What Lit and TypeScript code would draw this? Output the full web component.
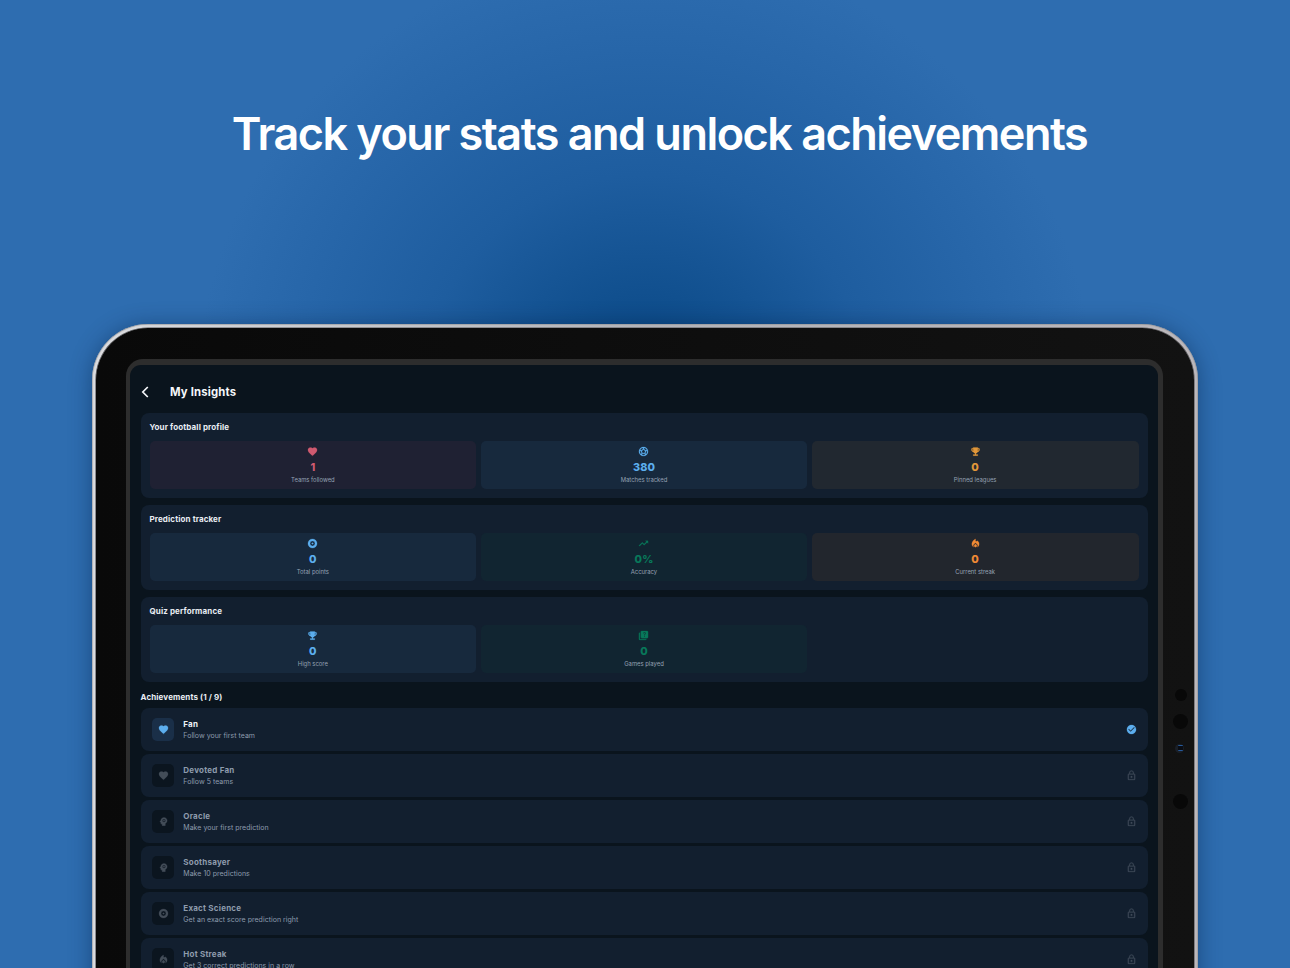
import { LitElement, html, css, svg } from "lit";
import { customElement, property } from "lit/decorators.js";

const ICONS: Record<string, string> = {
  heart: "M12 21.35l-1.45-1.32C5.4 15.36 2 12.28 2 8.5 2 5.42 4.42 3 7.5 3c1.74 0 3.41.81 4.5 2.09C13.09 3.81 14.76 3 16.5 3 19.58 3 22 5.42 22 8.5c0 3.78-3.4 6.86-8.55 11.54L12 21.35z",
  trophy: "M19 5h-2V3H7v2H5c-1.1 0-2 .9-2 2v1c0 2.55 1.92 4.63 4.39 4.94.63 1.5 1.98 2.63 3.61 2.96V18.4H7V21h10v-2.6h-4v-2.5c1.63-.33 2.98-1.46 3.61-2.96C19.08 12.63 21 10.55 21 8V7c0-1.1-.9-2-2-2zM5 8V7h2v3.82C5.84 10.4 5 9.3 5 8zm14 0c0 1.3-.84 2.4-2 2.82V7h2v1z",
  target: "M12 2a10 10 0 1 0 0 20 10 10 0 0 0 0-20zm0 4.6a5.4 5.4 0 1 1 0 10.8 5.4 5.4 0 0 1 0-10.8zm0 3.6a1.8 1.8 0 1 0 0 3.6 1.8 1.8 0 0 0 0-3.6z",
  lock: "M12 17c1.1 0 2-.9 2-2s-.9-2-2-2-2 .9-2 2 .9 2 2 2zm6-9h-1V6c0-2.76-2.24-5-5-5S7 3.24 7 6v2H6c-1.1 0-2 .9-2 2v10c0 1.1.9 2 2 2h12c1.1 0 2-.9 2-2V10c0-1.1-.9-2-2-2zM8.9 6c0-1.71 1.39-3.1 3.1-3.1s3.1 1.39 3.1 3.1v2H8.9V6zM18 20H6V10h12v10z",
  check: "M12 2C6.48 2 2 6.48 2 12s4.48 10 10 10 10-4.48 10-10S17.52 2 12 2zm-2 15l-5-5 1.41-1.41L10 14.17l7.59-7.59L19 8l-9 9z",
  trend: "M16 6l2.29 2.29-4.88 4.88-4-4L2 16.59 3.41 18l6-6 4 4 6.3-6.29L22 12V6z",
  fire: "M12 12.9l-2.13 2.09C9.31 15.55 9 16.28 9 17.06 9 18.68 10.35 20 12 20s3-1.32 3-2.94c0-.78-.31-1.52-.87-2.07L12 12.9zM16 6l-.44.55C14.38 8.02 12 7.19 12 5.3V2S4 6 4 13c0 2.92 1.56 5.47 3.89 6.86-.56-.79-.89-1.76-.89-2.8 0-1.32.52-2.56 1.47-3.5L12 10.1l3.53 3.47c.95.93 1.47 2.17 1.47 3.5 0 1.02-.31 1.96-.85 2.75 1.89-1.15 3.29-3.06 3.71-5.3.66-3.55-1.07-6.9-3.86-8.52z",
  quiz: "M4 6H2v14c0 1.1.9 2 2 2h14v-2H4V6zM20 2H8c-1.1 0-2 .9-2 2v12c0 1.1.9 2 2 2h12c1.1 0 2-.9 2-2V4c0-1.1-.9-2-2-2zm-5.99 13c-.59 0-1.05-.47-1.05-1.05 0-.59.47-1.04 1.05-1.04.59 0 1.04.45 1.04 1.04-.01.58-.45 1.05-1.04 1.05zm2.5-6.17c-.63.93-1.23 1.21-1.56 1.81-.13.24-.18.4-.18 1.18h-1.52c0-.41-.06-1.08.26-1.65.41-.73 1.18-1.16 1.63-1.8.48-.68.21-1.94-1.14-1.94-.88 0-1.32.67-1.5 1.23l-1.37-.57C11.51 5.96 12.52 5 13.99 5c1.23 0 2.08.56 2.51 1.26.37.6.58 1.73.01 2.57z",
  mind: "M13 3C9.25 3 6.2 5.94 6.02 9.64L4.1 12.2c-.25.33-.01.8.4.8H6v3c0 1.1.9 2 2 2h1v3h7v-4.68c2.36-1.12 4-3.53 4-6.32 0-3.87-3.13-7-7-7zm0 3.6a3.4 3.4 0 1 1 0 6.8 3.4 3.4 0 0 1 0-6.8zm0 1.6a1.8 1.8 0 1 0 0 3.6 1.8 1.8 0 0 0 0-3.6z",
  ball: "M12 2C6.48 2 2 6.48 2 12s4.48 10 10 10 10-4.48 10-10S17.52 2 12 2zm1 3.3l1.35-.95c1.82.56 3.37 1.76 4.38 3.34l-.39 1.34-1.35.46L13 6.7V5.3zm-3.35-.95L11 5.3v1.4L7.01 9.49l-1.35-.46-.39-1.34c1.01-1.57 2.56-2.77 4.38-3.34zM7.08 17.11l-1.14.1C4.73 15.81 4 13.99 4 12c0-.12.01-.23.02-.35l1-.73 1.38.48 1.46 4.34-.78 1.37zm7.42 2.48c-.79.26-1.63.41-2.5.41s-1.71-.15-2.5-.41l-.69-1.49.64-1.1h5.11l.64 1.11-.7 1.48zM14.27 15H9.73l-1.35-4.02L12 8.44l3.63 2.54L14.27 15zm3.79 2.21l-1.14-.1-.79-1.37 1.46-4.34 1.39-.47 1 .73c.01.11.02.22.02.34 0 1.99-.73 3.81-1.94 5.21z",
};

@customElement("app-icon")
class AppIcon extends LitElement {
  @property() name = "heart";
  static styles = css`
    :host { display: block; width: 11px; height: 11px; }
    svg { display: block; width: 100%; height: 100%; fill: currentColor; fill-rule: evenodd; stroke: currentColor; stroke-width: .5; }
  `;
  render() {
    return html`<svg viewBox="0 0 24 24">${svg`<path d=${ICONS[this.name]}></path>`}</svg>`;
  }
}

@customElement("stat-tile")
class StatTile extends LitElement {
  @property() icon = "";
  @property() value = "";
  @property() label = "";
  static styles = css`
    :host {
      display: flex; flex-direction: column; align-items: center;
      box-sizing: border-box; height: 48.5px; padding: 5.5px 0 0; border-radius: 5px;
    }
    .value { margin-top: 3px; font-size: 10.8px; line-height: 15px; font-weight: 800; letter-spacing: .1px; }
    .label { margin-top: 1px; font-size: 5.9px; line-height: 8px; color: #95a1b3; }
  `;
  render() {
    return html`<app-icon name=${this.icon}></app-icon>
      <div class="value">${this.value}</div>
      <div class="label">${this.label}</div>`;
  }
}

type Stat = [tone: string, icon: string, value: string, label: string];

const SECTIONS: { title: string; stats: Stat[] }[] = [
  { title: "Your football profile", stats: [
    ["red", "heart", "1", "Teams followed"],
    ["blue", "ball", "380", "Matches tracked"],
    ["amber", "trophy", "0", "Pinned leagues"],
  ] },
  { title: "Prediction tracker", stats: [
    ["blue", "target", "0", "Total points"],
    ["green", "trend", "0%", "Accuracy"],
    ["orange", "fire", "0", "Current streak"],
  ] },
  { title: "Quiz performance", stats: [
    ["blue", "trophy", "0", "High score"],
    ["green", "quiz", "0", "Games played"],
  ] },
];

const ACHIEVEMENTS: [string, string, string, boolean][] = [
  ["heart", "Fan", "Follow your first team", true],
  ["heart", "Devoted Fan", "Follow 5 teams", false],
  ["mind", "Oracle", "Make your first prediction", false],
  ["mind", "Soothsayer", "Make 10 predictions", false],
  ["target", "Exact Science", "Get an exact score prediction right", false],
  ["fire", "Hot Streak", "Get 3 correct predictions in a row", false],
];

@customElement("app-root")
class AppRoot extends LitElement {
  static styles = css`
    :host {
      display: block; position: relative; height: 968px; overflow: hidden; box-sizing: border-box;
      font-family: Inter, "Liberation Sans", sans-serif;
      background: radial-gradient(circle 450px at 645px 400px, #06437f 0%, #11508f 24%, #1e5d9f 50%, #2766a9 78%, #2e6db0 100%);
    }
    * { box-sizing: border-box; }
    h1 {
      margin: 0; padding: 107px 0 0 29px; height: 324px; text-align: center; color: #fff;
      font-size: 45px; line-height: 54px; font-weight: 600; letter-spacing: -1.52px; white-space: nowrap;
    }
    .device {
      position: relative; margin-left: 91.5px; width: 1106px; height: 760px; padding: 4px; border-radius: 56px;
      background: linear-gradient(90deg, #dcdde0, #b4b5ba 50%, #bcb8bc);
      box-shadow: 0 2px 22px rgba(4, 30, 66, .45), inset 0 0 1px .5px #8a8b8f;
    }
    .bezel {
      height: 100%; padding: 31px 30.5px 0 30px; border-radius: 52px;
      background: linear-gradient(90deg, #090909, #121212);
      box-shadow: 0 0 0 .6px #55565a;
    }
    .frame { height: 100%; padding: 6px 5px 0 4.5px; border-radius: 17px 17px 0 0; background: #2d2d2d; }
    .screen { height: 100%; padding: 0 10.5px; border-radius: 11px 11px 0 0; background: #0a141d; overflow: hidden; }
    header { display: flex; align-items: center; height: 47.5px; padding-top: 7px; color: #f5f7fa; }
    .back { width: 9px; height: 12px; margin-right: 20.5px; fill: none; stroke: currentColor; stroke-width: 1.7; }
    .heading { font-size: 11.3px; font-weight: 700; letter-spacing: .18px; }
    .card { height: 85.2px; margin-bottom: 7px; padding: 8.5px 9px; border-radius: 8px; background: #121f2f; }
    .title { height: 19.5px; padding-top: 1px; font-size: 8px; line-height: 11px; font-weight: 700; color: #e9edf3; letter-spacing: .12px; }
    .tiles { display: grid; grid-template-columns: repeat(3, 1fr); gap: 4.4px; }
    .red { background: #1f2133; color: #cf5a70; }
    .blue { background: #17293d; color: #5caeee; }
    .amber { background: #212830; color: #e2983a; }
    .green { background: #112531; color: #08785a; }
    .orange { background: #22262d; color: #f08a35; }
    .sub { height: 18.8px; padding-top: 2.5px; font-size: 8px; line-height: 11px; font-weight: 700; color: #e9edf3; letter-spacing: .12px; }
    .row {
      display: flex; align-items: center; height: 43px; margin-bottom: 3.05px; padding: 0 11px 0 11px;
      border-radius: 8px; background: #121f2f; color: #8e9bac;
    }
    .badge {
      display: flex; align-items: center; justify-content: center; width: 22.5px; height: 22.5px;
      margin-right: 9.3px; padding-left: .5px; border-radius: 5px; background: #0b151f; color: #434d58;
    }
    .text { flex: 1; padding-top: 1.2px; }
    .name { font-size: 8px; line-height: 11px; font-weight: 700; letter-spacing: .23px; }
    .desc { margin-top: 1px; font-size: 7px; line-height: 10px; color: #8d9bad; letter-spacing: .02px; }
    .state { color: #3f4a58; }
    .on .name { color: #eef2f7; }
    .on .badge { background: #1a2f48; color: #5caeee; }
    .on .state { color: #5caeee; }
    .sensor { position: absolute; border-radius: 50%; background: #080808; }
    .s1 { left: 1083px; top: 365px; width: 12px; height: 12px; }
    .s2 { left: 1081px; top: 390px; width: 15px; height: 15px; }
    .s3 { left: 1083px; top: 420px; width: 9px; height: 9px; background: #1a1f27; }
    .s4 { left: 1081px; top: 470px; width: 15px; height: 15px; }
    .glint { position: absolute; left: 3px; top: 1px; width: 5px; height: 6px; border: solid #26599a; border-width: 1.5px 0; background: #0a0d14; border-radius: 1px; }
  `;

  render() {
    return html`
      <h1>Track your stats and unlock achievements</h1>
      <div class="device">
        <div class="bezel"><div class="frame"><div class="screen">
          <header>
            <svg class="back" viewBox="0 0 9 12"><path d="M6.8 1L1.8 6l5 5"></path></svg>
            <div class="heading">My Insights</div>
          </header>
          ${SECTIONS.map((s) => html`
            <section class="card">
              <div class="title">${s.title}</div>
              <div class="tiles">
                ${s.stats.map(([tone, icon, value, label]) => html`
                  <stat-tile class=${tone} icon=${icon} value=${value} label=${label}></stat-tile>`)}
              </div>
            </section>`)}
          <div class="sub">Achievements (1 / 9)</div>
          ${ACHIEVEMENTS.map(([icon, name, desc, on]) => html`
            <div class="row ${on ? "on" : ""}">
              <div class="badge"><app-icon name=${icon}></app-icon></div>
              <div class="text"><div class="name">${name}</div><div class="desc">${desc}</div></div>
              <app-icon class="state" name=${on ? "check" : "lock"}></app-icon>
            </div>`)}
        </div></div></div>
        <div class="sensor s1"></div>
        <div class="sensor s2"></div>
        <div class="sensor s3"><div class="glint"></div></div>
        <div class="sensor s4"></div>
      </div>`;
  }
}
